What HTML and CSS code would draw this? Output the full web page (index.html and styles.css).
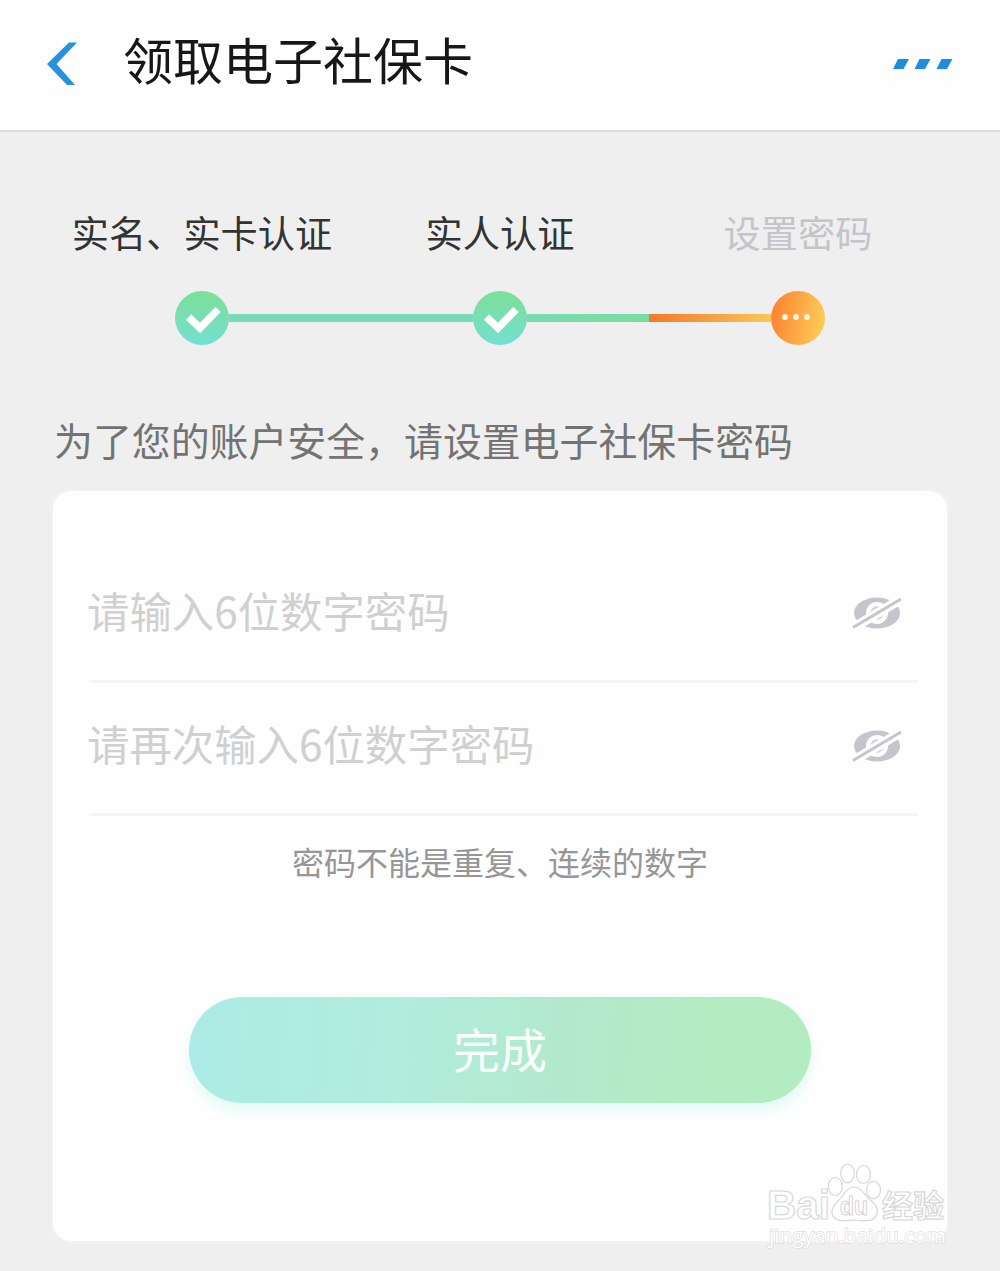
FILE: index.html
```html
<!DOCTYPE html>
<html lang="zh-CN">
<head>
  <meta charset="UTF-8" />
  <meta name="viewport" content="width=device-width, initial-scale=1.0"/>
  <title>领取电子社保卡</title>
  <link rel="stylesheet" href="styles.css">
</head>
<body>

<header class="header">
  <svg class="back" viewBox="0 0 30 44" width="30" height="44">
    <path d="M22 0.5H30L9.500 22L28 43H20L0 22Z" fill="#2492df"/>
  </svg>
  <h1>领取电子社保卡</h1>
  <svg class="more" viewBox="0 0 60 10" width="60" height="10">
    <path d="M5 0H16L10.500 10H0ZM26.500 0H37.500L32 10H21.500ZM48.500 0H59.500L54 10H43.500Z" fill="#1e8de0"/>
  </svg>
</header>

<main>
  <div class="steps">
    <span>实名、实卡认证</span>
    <span>实人认证</span>
    <span class="pending">设置密码</span>
  </div>

  <div class="track">
    <div class="dot done">
      <svg viewBox="0 0 54 54" width="54" height="54"><path d="M13.500 26L25 37L43 18.500" fill="none" stroke="#fff" stroke-width="7.500"/></svg>
    </div>
    <div class="line"></div>
    <div class="dot done">
      <svg viewBox="0 0 54 54" width="54" height="54"><path d="M13.500 26L25 37L43 18.500" fill="none" stroke="#fff" stroke-width="7.500"/></svg>
    </div>
    <div class="line half"></div>
    <div class="dot current"><i></i><i></i><i></i></div>
  </div>

  <p class="tip">为了您的账户安全，请设置电子社保卡密码</p>

  <form class="card">
    <div class="field">
      <input type="password" placeholder="请输入6位数字密码">
      <svg class="eye" viewBox="0 0 50 34" width="50" height="34">
        <ellipse cx="25" cy="17" rx="23" ry="15.500" fill="#c5c5ce"/>
        <circle cx="25" cy="17" r="11" fill="#fff"/>
        <circle cx="25" cy="17" r="5.500" fill="none" stroke="#d0d0d8" stroke-width="2.500"/>
        <path d="M-1 30L47 1" stroke="#fff" stroke-width="4"/>
        <path d="M3 34L51 5" stroke="#fff" stroke-width="4"/>
        <path d="M1 31.500L49 3" stroke="#c5c5ca" stroke-width="3"/>
      </svg>
    </div>
    <div class="field">
      <input type="password" placeholder="请再次输入6位数字密码">
      <svg class="eye" viewBox="0 0 50 34" width="50" height="34">
        <ellipse cx="25" cy="17" rx="23" ry="15.500" fill="#c5c5ce"/>
        <circle cx="25" cy="17" r="11" fill="#fff"/>
        <circle cx="25" cy="17" r="5.500" fill="none" stroke="#d0d0d8" stroke-width="2.500"/>
        <path d="M-1 30L47 1" stroke="#fff" stroke-width="4"/>
        <path d="M3 34L51 5" stroke="#fff" stroke-width="4"/>
        <path d="M1 31.500L49 3" stroke="#c5c5ca" stroke-width="3"/>
      </svg>
    </div>
    <p class="note">密码不能是重复、连续的数字</p>
    <button type="button">完成</button>
  </form>
</main>

<svg class="watermark" viewBox="0 0 190 92" width="190" height="92">
  <g fill="#fff" stroke="#d8d8d8" stroke-width="1.200">
    <text class="brand" x="5" y="59" font-size="41" textLength="63" lengthAdjust="spacingAndGlyphs">Bai</text>
    <ellipse cx="73.300" cy="26.500" rx="7" ry="9"/>
    <ellipse cx="85.500" cy="13.500" rx="6.800" ry="9.300"/>
    <ellipse cx="101.500" cy="14.500" rx="7" ry="9"/>
    <ellipse cx="111.500" cy="30" rx="7" ry="8.800"/>
    <path d="M92 27C99 27 102 34 107 39C113 44 117 48 115 54C113 62 104 61 92 60C81 61 73 62 70 54C69 48 73 44 78 39C83 34 85 27 92 27Z"/>
    <text class="brand" x="78" y="55" font-size="25" textLength="28" lengthAdjust="spacingAndGlyphs">du</text>
    <text class="brand" x="120" y="57" font-size="31" textLength="62">经验</text>
  </g>
  <text class="site" x="7" y="83" font-size="20" textLength="177" lengthAdjust="spacingAndGlyphs">jingyan.baidu.com</text>
</svg>

</body>
</html>
```
FILE: styles.css
```css
* {
  box-sizing: border-box;
}
body {
  font-family: 'Noto Sans CJK SC', sans-serif;
  background: #efefef;
  margin: 0;
  position: relative;
  height: 1271px;
  overflow: hidden;
}
.header {
  background: #fefefe;
  height: 132px;
  padding: 0 47px 3px 47px;
  border-bottom: 2px solid #dcdcdc;
  display: flex;
  align-items: center;
}
h1 {
  flex: 1;
  margin: 0 0 11px 46px;
  font-size: 50px;
  font-weight: 400;
  line-height: 60px;
  color: #171717;
}
main {
  padding: 0 53px;
}
.steps {
  display: grid;
  grid-template-columns: repeat(3, 1fr);
  padding-top: 73px;
  font-size: 37.2px;
  line-height: 54px;
  text-align: center;
  white-space: nowrap;
  color: #333;
}
.pending {
  color: #c4c4ca;
}
.track {
  display: flex;
  align-items: center;
  margin-top: 32px;
  padding: 0 122px;
}
.dot {
  width: 54px;
  height: 54px;
  border-radius: 50%;
}
.done {
  background: linear-gradient(#7cdf98, #74dfd2);
}
.done svg {
  display: block;
}
.current {
  display: flex;
  align-items: center;
  justify-content: center;
  gap: 5px;
  padding: 0 4px 2px 0;
  background: linear-gradient(100deg, #fd8632 10%, #fbd25c);
}
.current i {
  width: 6px;
  height: 6px;
  border-radius: 50%;
  background: #fff3dc;
}
.line {
  flex: 1;
  height: 8px;
  background: #7adab7;
}
.half {
  background: linear-gradient(90deg, #78dbb0, #78dca0 50%, #f27a2c 50%, #fbc556);
}
.tip {
  margin: 66px 0 0 1px;
  font-size: 38.9px;
  line-height: 56px;
  color: #737373;
}
.card {
  height: 750px;
  margin-top: 24px;
  padding: 59px 29px 0 36px;
  background: #fefefe;
  border-radius: 18px;
  box-shadow: 0 0 4px #f8f8f8;
}
.field {
  display: flex;
  align-items: center;
  height: 133px;
  padding: 0 16px 5px 0;
  border-bottom: 3px solid #f5f5f5;
}
input {
  flex: 1;
  min-width: 0;
  height: 64px;
  margin: 0 0 7px -2px;
  padding: 0;
  border: none;
  outline: none;
  background: none;
  font-family: inherit;
  font-size: 42.4px;
}
input::placeholder {
  color: #d0d0d0;
}
.note {
  margin: 22px 0 0;
  padding-right: 7px;
  font-size: 32px;
  line-height: 46px;
  text-align: center;
  color: #969696;
}
button {
  display: block;
  width: 622px;
  height: 106px;
  margin: 113px 0 0 100px;
  padding: 0 0 5px;
  border: none;
  border-radius: 53px;
  background: linear-gradient(95deg, #acebe6, #b1ecdc 35%, #b2e9cd 60%, #b2ecc0 85%);
  box-shadow: 0 7px 14px #e0faf5;
  font-family: inherit;
  font-size: 47px;
  color: #fafffc;
}
.watermark {
  position: absolute;
  left: 762px;
  top: 1160px;
}
.brand {
  font-family: 'Liberation Sans', 'Noto Sans CJK SC', sans-serif;
  font-weight: bold;
}
.site {
  font-family: 'Open Sans', sans-serif;
  fill: #fff;
  stroke: #dedede;
  stroke-width: 1.5px;
  paint-order: stroke;
}
```
